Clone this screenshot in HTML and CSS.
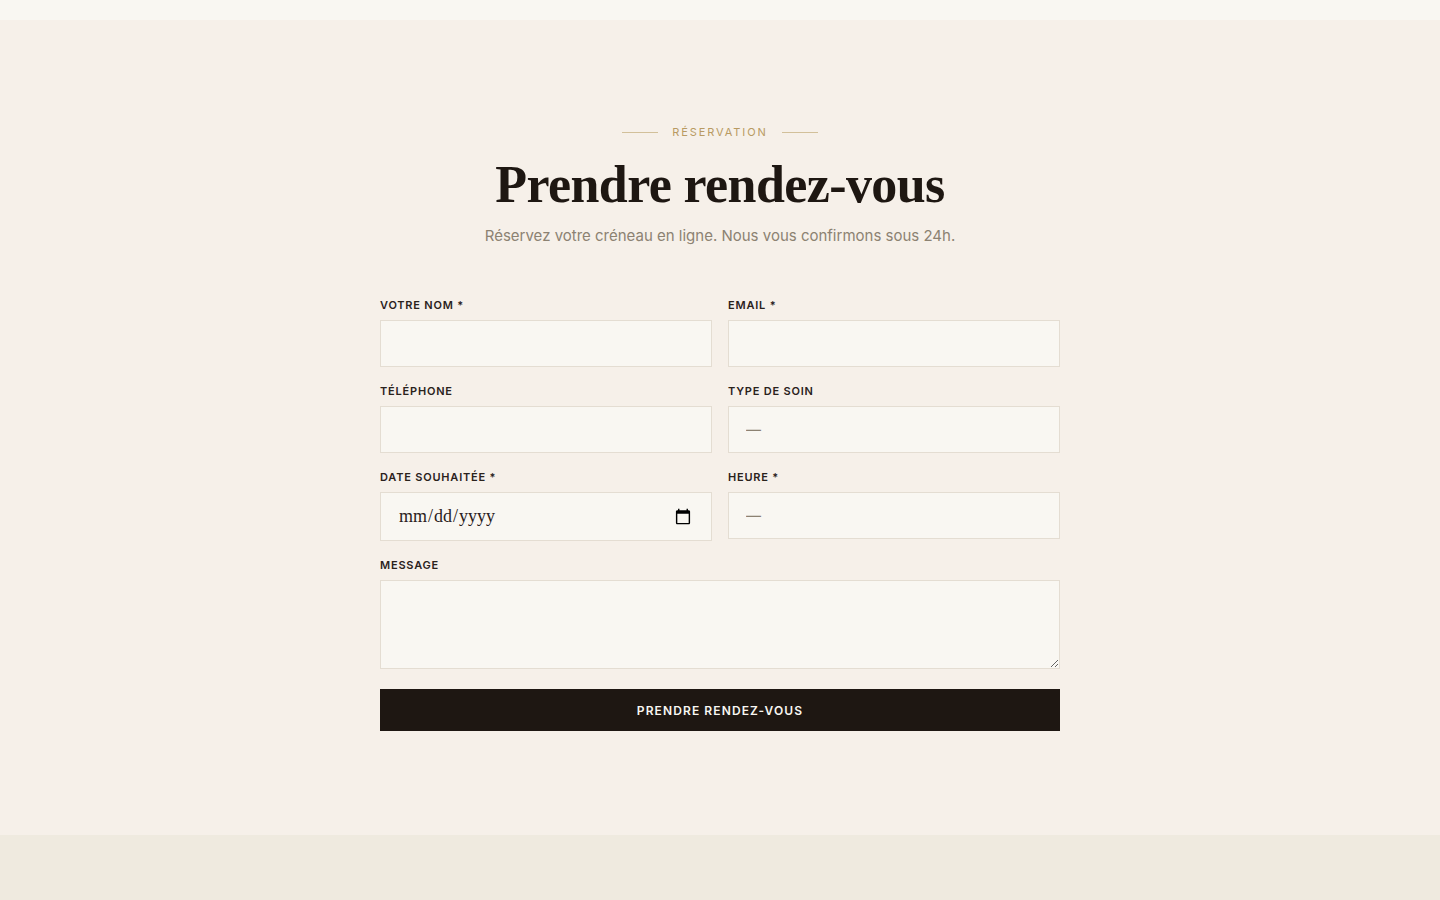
FILE: index.html
```html
<!DOCTYPE html>
<html lang="fr">
<head>
    <meta charset="UTF-8">
    <meta name="viewport" content="width=device-width, initial-scale=1.0">
    <title>Prendre rendez-vous</title>
    <link rel="stylesheet" href="styles.css">
</head>
<body>

<div class="top-band"></div>

<section class="booking">
    <div class="booking-head">
        <div class="eyebrow"><span>Réservation</span></div>
        <h2>Prendre rendez-vous</h2>
        <p class="lead">Réservez votre créneau en ligne. Nous vous confirmons sous 24h.</p>
    </div>

    <form class="booking-form" onsubmit="return false;">
        <div class="field">
            <label for="nom">Votre nom *</label>
            <input type="text" id="nom">
        </div>
        <div class="field">
            <label for="email">Email *</label>
            <input type="email" id="email">
        </div>
        <div class="field">
            <label for="tel">Téléphone</label>
            <input type="tel" id="tel">
        </div>
        <div class="field">
            <label for="soin">Type de soin</label>
            <select id="soin">
                <option>—</option>
            </select>
        </div>
        <div class="field">
            <label for="date">Date souhaitée *</label>
            <input type="date" id="date" class="date-input">
        </div>
        <div class="field">
            <label for="heure">Heure *</label>
            <select id="heure">
                <option>—</option>
            </select>
        </div>
        <div class="field full">
            <label for="message">Message</label>
            <textarea id="message"></textarea>
        </div>
        <button type="submit" class="submit full">Prendre rendez-vous</button>
    </form>
</section>

<footer class="bottom"></footer>

</body>
</html>
```

FILE: styles.css
```css
body {
    margin: 0;
    padding: 0;
    background: #f6f0e9;
    color: #1e1712;
    font-family: Inter, "Liberation Sans", sans-serif;
}

.top-band {
    height: 20px;
    background: #f9f7f2;
}

.booking {
    padding: 104px 0 104px;
}

.booking-head {
    text-align: center;
}

.eyebrow {
    display: flex;
    justify-content: center;
    align-items: center;
    gap: 14px;
    height: 16px;
    font-size: 11px;
    letter-spacing: 1.9px;
    text-transform: uppercase;
    color: #b89a62;
}

.eyebrow::before,
.eyebrow::after {
    content: "";
    width: 36px;
    height: 1px;
    background: #d2c09a;
}

.booking-head h2 {
    margin: 16px 0 0;
    font-family: "Liberation Serif", "DejaVu Serif", serif;
    font-weight: 700;
    font-size: 52px;
    line-height: 58px;
    letter-spacing: -0.6px;
    color: #1e1712;
}

.lead {
    margin: 10px 0 0;
    font-size: 15px;
    line-height: 24px;
    color: #8c8272;
}

.booking-form {
    width: 680px;
    margin: 50px auto 0;
    display: grid;
    grid-template-columns: 1fr 1fr;
    column-gap: 16px;
    row-gap: 17px;
}

.field {
    display: flex;
    flex-direction: column;
}

.full {
    grid-column: 1 / -1;
}

.field label {
    font-size: 11px;
    line-height: 14px;
    font-weight: 600;
    letter-spacing: 0.8px;
    text-transform: uppercase;
    margin-bottom: 8px;
    color: #2a221c;
}

.field input,
.field select,
.field textarea {
    box-sizing: border-box;
    height: 47px;
    margin: 0;
    padding: 0 17px;
    border: 1px solid #e4ddd2;
    border-radius: 0;
    background: #f9f7f2;
    font-family: Inter, "Liberation Sans", sans-serif;
    font-size: 15px;
    color: #1e1712;
    outline: none;
}

.field select {
    -webkit-appearance: none;
    appearance: none;
    color: #8c8272;
}

.field .date-input {
    height: 49px;
    padding-right: 17px;
    font-family: "Liberation Serif", serif;
    font-size: 18px;
    color: #2a221c;
}

.field textarea {
    height: 89px;
    padding: 12px 17px;
    resize: vertical;
}

.submit {
    margin-top: 3px;
    height: 42px;
    border: none;
    background: #1e1712;
    color: #f9f7f2;
    font-family: Inter, "Liberation Sans", sans-serif;
    font-size: 12px;
    font-weight: 600;
    letter-spacing: 1.1px;
    text-transform: uppercase;
    cursor: pointer;
}

.bottom {
    height: 65px;
    background: #efeadf;
}
```
